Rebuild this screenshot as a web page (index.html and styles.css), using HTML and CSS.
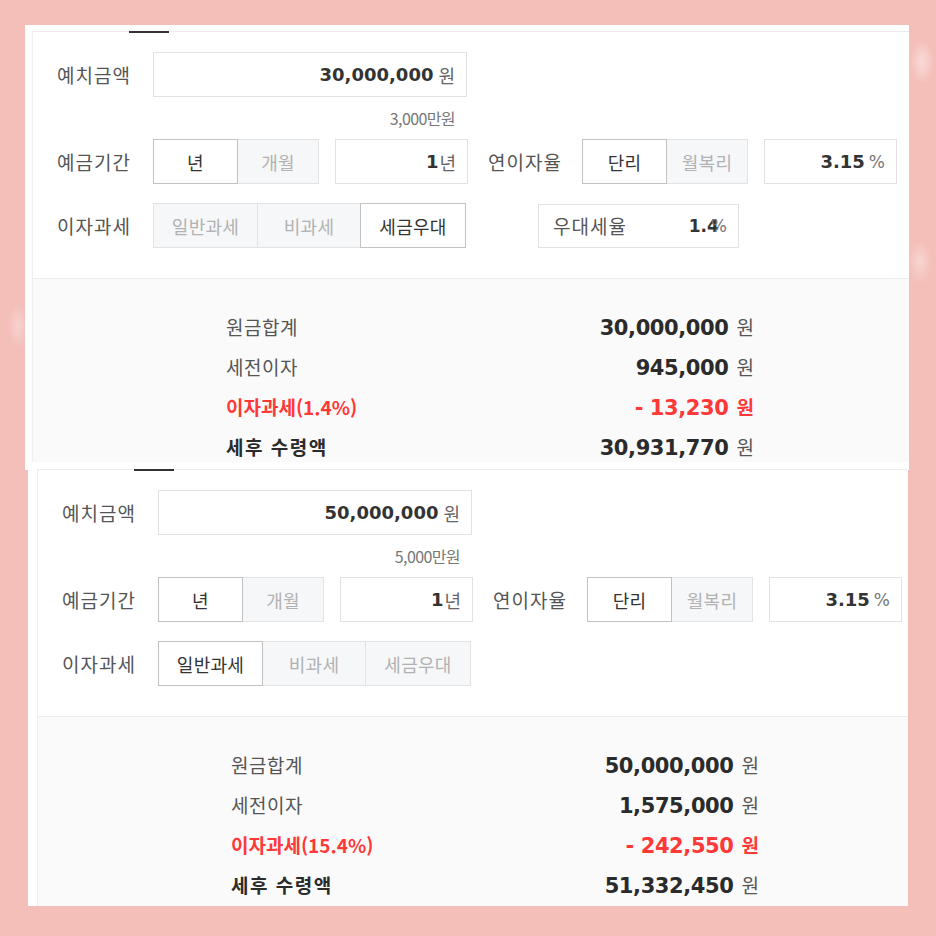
FILE: index.html
```html
<!DOCTYPE html>
<html lang="ko">
<head>
    <meta charset="UTF-8">
    <meta name="viewport" content="width=device-width, initial-scale=1.0">
    <title>예금 계산기</title>
    <link rel="stylesheet" href="styles.css">
</head>
<body>
    <section class="shot shot-one">
        <div class="calc">
            <div class="tab-mark"></div>
            <div class="form">
                <div class="row">
                    <span class="label">예치금액</span>
                    <div class="field field-wide"><b class="num">30,000,000</b><span class="unit">원</span></div>
                </div>
                <div class="hint">3,000만원</div>
                <div class="row">
                    <span class="label">예금기간</span>
                    <div class="seg">
                        <span class="opt w85 on">년</span>
                        <span class="opt w82">개월</span>
                    </div>
                    <div class="field field-short"><b class="num">1</b><span class="unit tight">년</span></div>
                    <span class="label label-2">연이자율</span>
                    <div class="seg">
                        <span class="opt w85 on">단리</span>
                        <span class="opt w82">월복리</span>
                    </div>
                    <div class="field field-short field-pct"><b class="num">3.15</b><span class="unit pct">%</span></div>
                </div>
                <div class="row row-last">
                    <span class="label">이자과세</span>
                    <div class="seg">
                        <span class="opt w105">일반과세</span>
                        <span class="opt w104">비과세</span>
                        <span class="opt w106 on">세금우대</span>
                    </div>
                    <div class="field field-rate">
                        <span class="rate-name">우대세율</span>
                        <b class="num num-sm">1.4</b><span class="unit pct over">%</span>
                    </div>
                </div>
            </div>
            <div class="result">
                <div class="line"><span class="name">원금합계</span><span class="amount"><b>30,000,000</b><span class="won">원</span></span></div>
                <div class="line"><span class="name">세전이자</span><span class="amount"><b>945,000</b><span class="won">원</span></span></div>
                <div class="line minus"><span class="name">이자과세(1.4%)</span><span class="amount"><b>- 13,230</b><span class="won">원</span></span></div>
                <div class="line total"><span class="name">세후 수령액</span><span class="amount"><b>30,931,770</b><span class="won">원</span></span></div>
            </div>
        </div>
    </section>

    <section class="shot shot-two">
        <div class="calc">
            <div class="tab-mark"></div>
            <div class="form">
                <div class="row">
                    <span class="label">예치금액</span>
                    <div class="field field-wide"><b class="num">50,000,000</b><span class="unit">원</span></div>
                </div>
                <div class="hint">5,000만원</div>
                <div class="row">
                    <span class="label">예금기간</span>
                    <div class="seg">
                        <span class="opt w85 on">년</span>
                        <span class="opt w82">개월</span>
                    </div>
                    <div class="field field-short"><b class="num">1</b><span class="unit tight">년</span></div>
                    <span class="label label-2">연이자율</span>
                    <div class="seg">
                        <span class="opt w85 on">단리</span>
                        <span class="opt w82">월복리</span>
                    </div>
                    <div class="field field-short field-pct"><b class="num">3.15</b><span class="unit pct">%</span></div>
                </div>
                <div class="row row-last">
                    <span class="label">이자과세</span>
                    <div class="seg">
                        <span class="opt w105 on">일반과세</span>
                        <span class="opt w104">비과세</span>
                        <span class="opt w106">세금우대</span>
                    </div>
                </div>
            </div>
            <div class="result">
                <div class="line"><span class="name">원금합계</span><span class="amount"><b>50,000,000</b><span class="won">원</span></span></div>
                <div class="line"><span class="name">세전이자</span><span class="amount"><b>1,575,000</b><span class="won">원</span></span></div>
                <div class="line minus"><span class="name">이자과세(15.4%)</span><span class="amount"><b>- 242,550</b><span class="won">원</span></span></div>
                <div class="line total"><span class="name">세후 수령액</span><span class="amount"><b>51,332,450</b><span class="won">원</span></span></div>
            </div>
        </div>
    </section>
</body>
</html>
```

FILE: styles.css
```css
body{
    margin:0;
    padding:25px 0 0 25px;
    background:
        radial-gradient(ellipse 12px 22px at 922px 62px, rgba(255,255,255,.45), rgba(255,255,255,0)),
        radial-gradient(ellipse 12px 22px at 920px 262px, rgba(255,255,255,.35), rgba(255,255,255,0)),
        radial-gradient(ellipse 10px 22px at 18px 326px, rgba(255,255,255,.3), rgba(255,255,255,0)),
        #f4bfb9;
    height:911px;
    overflow:hidden;
    font-family:"Noto Sans CJK KR", "Noto Sans", sans-serif;
    color:#555;
}

/* two captured screens, the second lies a little over the first */
.shot{background:#fff; display:flex; box-sizing:border-box;}
.shot-one{width:884px; height:445px; padding:6px 0 0 7px;}
.shot-two{width:880px; height:444px; padding:7px 0 0 9px; margin:-8px 0 0 3px; position:relative;}

.calc{flex:1; display:flex; flex-direction:column; border-top:1px solid #ededed; border-left:1px solid #efefef;}
.tab-mark{width:40px; height:2px; background:#333; margin:-1px 0 -1px 96px; flex:none;}

/* form */
.form{padding:20px 0 30px 24px; flex:none;}
.row{display:flex; align-items:center; height:45px;}
.row-last{margin-top:19px;}
.label{width:96px; font-size:19px; letter-spacing:1px; color:#555; flex:none;}
.label-2{width:94px; margin-left:20px;}

.field{height:45px; box-sizing:border-box; border:1px solid #e2e2e2; display:flex; align-items:center; justify-content:flex-end; padding-right:11px; flex:none; background:#fff;}
.field-wide{width:314px;}
.field-short{width:133px; margin-left:16px;}
.num{font-family:"DejaVu Sans", sans-serif; font-weight:bold; font-size:18px; color:#333;}
.num-sm{font-size:17px;}
.unit{font-size:18px; color:#666; margin-left:5px;}
.unit.tight{margin-left:1px;}
.unit.pct{font-family:"DejaVu Sans", sans-serif; font-size:17px; margin-left:4px; color:#777;}
.unit.over{margin-left:-8px;}

.field-rate{width:201px; margin-left:72px; height:44px;}
.rate-name{margin-right:auto; padding-left:14px; font-size:19px; letter-spacing:1px; color:#555;}

.hint{width:314px; margin-left:96px; height:42px; line-height:42px; text-align:right; box-sizing:border-box; padding-right:12px; font-size:16px; letter-spacing:-.6px; color:#777;}

.seg{display:flex; height:45px; flex:none;}
.opt{box-sizing:border-box; height:45px; display:flex; align-items:center; justify-content:center; border:1px solid #e3e3e3; background:#f6f7f9; color:#b2b2b2; font-size:18px; letter-spacing:.3px;}
.opt + .opt{margin-left:-1px;}
.opt.on{background:#fff; color:#333; border-color:#c2c2c2; position:relative;}
.w85{width:85px;}
.w82{width:82px;}
.w105{width:105px;}
.w104{width:104px;}
.w106{width:106px;}

/* results */
.result{flex:1; background:#fafafa; border-top:1px solid #ededed; padding:27px 0 0 193px;}
.line{width:528px; height:40px; display:flex; align-items:center; justify-content:space-between;}
.name{font-size:19px; letter-spacing:.5px; color:#555;}
.amount{display:flex; align-items:baseline;}
.amount b{font-family:"DejaVu Sans", sans-serif; font-size:21px; color:#2b2b2b; letter-spacing:-.4px;}
.won{font-size:19px; color:#555; margin-left:8px;}
.minus .name, .minus b, .minus .won{color:#ff3838;}
.minus .name{font-weight:bold; letter-spacing:0;}
.minus .won{font-weight:bold;}
.total .name{font-weight:bold; color:#2b2b2b; letter-spacing:1.5px;}
```
